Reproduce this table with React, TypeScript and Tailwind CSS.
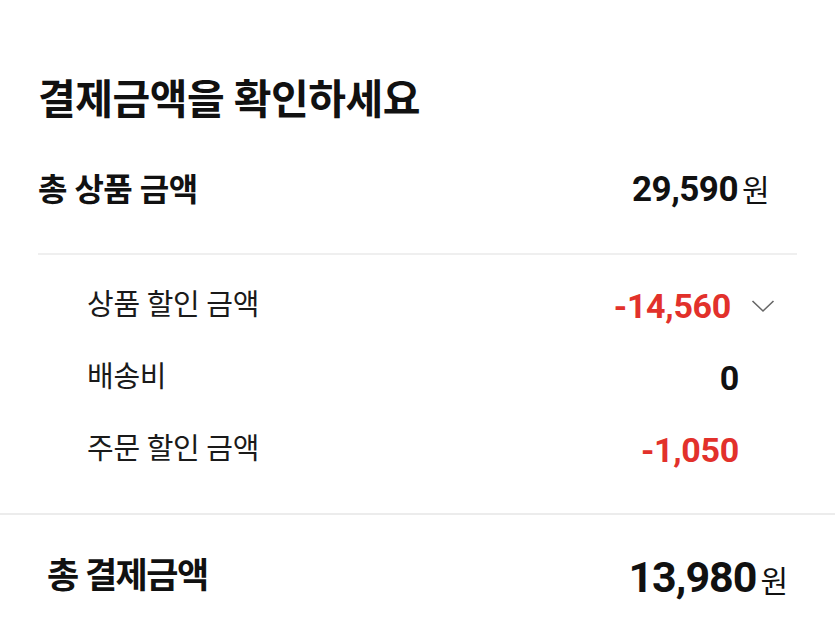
const won = "'Roboto', 'Noto Sans CJK KR', sans-serif"

const Row = ({ label, value, red, chevron }: { label: string; value: string; red?: boolean; chevron?: boolean }) => {
    return (
        <div className="h-[72px] flex items-center justify-between pl-[49px]">
            <span className="text-[29px] text-[#1a1a1a] tracking-[-0.3px]">{label}</span>
            <div className="flex items-center">
                <span className={`text-[34px] font-bold tracking-[-0.3px] ${red ? "text-[#e2312b]" : "text-[#111]"} ${chevron ? "mr-[8px]" : ""}`}>{value}</span>
                <div className="w-[58px] flex items-center">
                    {chevron && (
                        <svg width="24" height="14" viewBox="0 0 24 14" className="ml-[12px]">
                            <polyline points="1.5,2 12,12 22.5,2" fill="none" stroke="#666" strokeWidth="1.6" />
                        </svg>
                    )}
                </div>
            </div>
        </div>
    )
}

const App = () => {
    return (
        <main className="w-[835px] h-[626px] bg-white overflow-hidden text-[#111]" style={{ fontFamily: won }}>
            <section className="px-[38px] pt-[76px]">
                <h1 className="text-[41px] leading-[48px] font-bold tracking-[-0.5px]">결제금액을 확인하세요</h1>
                <div className="mt-[36px] h-[60px] flex items-center justify-between pr-[1px]">
                    <span className="text-[32px] font-bold tracking-[-0.5px]">총 상품 금액</span>
                    <div className="flex items-center">
                        <span className="text-[35px] font-bold tracking-[-0.5px]">29,590</span>
                        <div className="w-[58px] pl-[4px]">
                            <span className="text-[30px]">원</span>
                        </div>
                    </div>
                </div>
                <div className="mt-[33px] h-[2px] bg-[#efefef]" />
                <div className="mt-[15px]">
                    <Row label="상품 할인 금액" value="-14,560" red chevron />
                    <Row label="배송비" value="0" />
                    <Row label="주문 할인 금액" value="-1,050" red />
                </div>
            </section>
            <div className="mt-[27px] h-[2px] bg-[#ececec]" />
            <div className="mt-[32px] h-[60px] px-[47px] flex items-center justify-between">
                <span className="text-[35px] font-bold tracking-[-1.5px]">총 결제금액</span>
                <div className="flex items-baseline">
                    <span className="text-[43px] font-bold tracking-[-1px]">13,980</span>
                    <span className="ml-[4px] text-[30px]">원</span>
                </div>
            </div>
        </main>
    )
}

export default App
